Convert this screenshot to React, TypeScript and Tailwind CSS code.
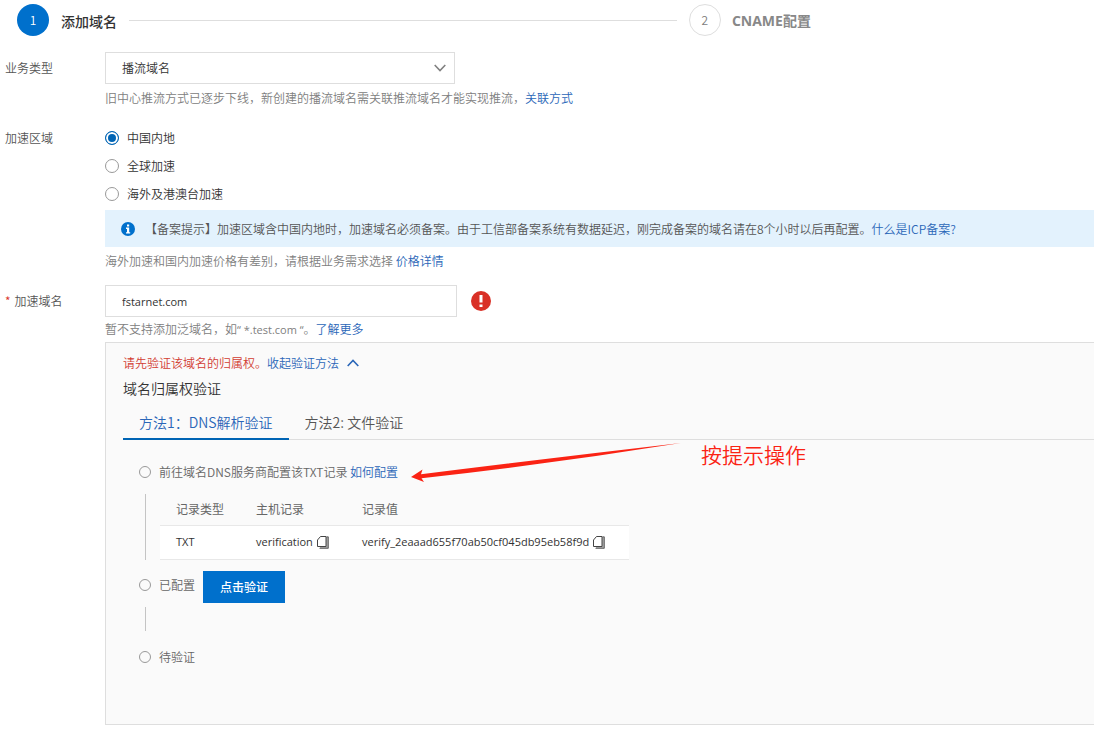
import { useState } from 'react'
import { clsx } from 'clsx'

const regions = ['中国内地', '全球加速', '海外及港澳台加速']
const tabs = ['方法1：DNS解析验证', '方法2: 文件验证']

const Link = ({ children }: { children: React.ReactNode }) => (
    <a href="#" className="text-[#2a66b8] hover:underline">{children}</a>
)

const CopyIcon = () => (
    <svg viewBox="0 0 12 13" className="h-[13px] w-3 text-[#444]" fill="none" stroke="currentColor">
        <path d="M9 1h2.300v11.300H3v-1.800h6z" fill="#aaa" stroke="none" />
        <path d="M3.500 .5H9v10H.5V4z" />
        <path d="M9.500 .8h1.800v11.500H2.500" strokeWidth=".8" />
    </svg>
)

const CopyButton = ({ label }: { label: string }) => (
    <button type="button" aria-label={label} className="cursor-pointer">
        <CopyIcon />
    </button>
)

const Dot = () => <span className="size-3 shrink-0 rounded-full border border-[#999]" />

const Steps = () => (
    <ol className="flex pr-0.5 pl-3">
        <li className="flex flex-5 items-center gap-3">
            <span className="flex size-8 shrink-0 items-center justify-center rounded-full bg-[#0070cc] text-white">1</span>
            <span className="pt-0.5 text-sm font-medium text-[#333]">添加域名</span>
            <span className="mr-3 h-px flex-1 bg-[#dedede]" />
        </li>
        <li className="flex flex-3 items-center gap-[11px]">
            <span className="flex size-8 shrink-0 items-center justify-center rounded-full border border-[#dedede] text-[#808080]">2</span>
            <span className="pt-0.5 font-['Open_Sans','Noto_Sans_CJK_SC',sans-serif] text-sm font-bold text-[#888]">CNAME配置</span>
        </li>
    </ol>
)

const RecordTable = () => (
    <table className="border-collapse text-left">
        <thead>
            <tr className="h-[31px] border-b border-[#e8e8e8] text-[#666]">
                <th className="w-20 pl-4 font-normal">记录类型</th>
                <th className="w-[106px] pl-4 font-normal">主机记录</th>
                <th className="w-[283px] pl-4 font-normal">记录值</th>
            </tr>
        </thead>
        <tbody className="font-['Open_Sans',sans-serif] text-[11px] font-normal">
            <tr className="h-[34px] border-b border-[#e8e8e8] bg-white text-[#333]">
                <td className="pl-4">TXT</td>
                <td className="pl-4">
                    <span className="flex items-center gap-1">verification <CopyButton label="复制主机记录" /></span>
                </td>
                <td className="pl-4">
                    <span className="flex items-center gap-1">
                        verify_2eaaad655f70ab50cf045db95eb58f9d <CopyButton label="复制记录值" />
                    </span>
                </td>
            </tr>
        </tbody>
    </table>
)

// red arrow and note that float over the panel
const Annotation = () => (
    <div className="pointer-events-none absolute top-0 left-[288px] flex items-start gap-5 text-[#fa2314]">
        <svg viewBox="0 0 270 44" className="h-11 w-[270px]" fill="currentColor">
            <path d="M0 37 11.5 29.5 10 34.2 Q140 18 270 3 Q140 24 10.500 38.200 L13 42z" />
        </svg>
        <span className="text-[21px] leading-7">按提示操作</span>
    </div>
)

const VerifyPanel = () => {
    const [tab, setTab] = useState(0)

    return (
        <section className="mt-0.5 border border-r-0 border-[#dedede] bg-[#fafafa] pt-2 pb-[55px] pl-[17px]">
            <p className="flex h-6 items-center text-[#d23c32]">
                请先验证该域名的归属权。
                <button type="button" className="flex cursor-pointer items-center gap-2 text-[#2a66b8]">
                    收起验证方法
                    <svg viewBox="0 0 12 8" className="h-2 w-3" fill="none" stroke="currentColor" strokeWidth="1.6">
                        <path d="M.7 7 6 1.500 11.300 7" />
                    </svg>
                </button>
            </p>
            <h2 className="flex h-7 items-center pb-0.5 text-sm text-[#333]">域名归属权验证</h2>
            <div role="tablist" className="mt-1 flex border-b border-[#dedede] text-sm">
                {tabs.map((name, i) => (
                    <button
                        key={name}
                        type="button"
                        role="tab"
                        aria-selected={i === tab}
                        onClick={() => setTab(i)}
                        className={clsx(
                            '-mb-px h-[33px] cursor-pointer border-b-2 px-4 pb-0.5',
                            i === tab ? 'border-[#0064b4] text-[#2a66b8]' : 'border-transparent text-[#555]',
                        )}
                    >
                        {name}
                    </button>
                ))}
            </div>
            <div className="relative pt-5 pl-4 text-[#666]">
                <div className="flex h-6 items-center gap-2">
                    <Dot />
                    <p>前往域名DNS服务商配置该TXT记录 <Link>如何配置</Link></p>
                </div>
                <div className="mt-2.5 ml-1.5 flex gap-3.5">
                    <span className="w-px bg-[#c4c4c4]" />
                    <RecordTable />
                </div>
                <div className="mt-[11px] flex gap-2">
                    <div className="flex h-7 items-center gap-2">
                        <Dot />
                        已配置
                    </div>
                    <button type="button" className="h-8 cursor-pointer bg-[#0070cc] px-[17px] font-medium text-white">点击验证</button>
                </div>
                <div className="mt-1 ml-1.5 h-6 w-px bg-[#c4c4c4]" />
                <div className="mt-3.5 flex h-6 items-center gap-2">
                    <Dot />
                    待验证
                </div>
                <Annotation />
            </div>
        </section>
    )
}

const App = () => {
    const [region, setRegion] = useState(regions[0])

    return (
        <main className="overflow-hidden bg-white pt-1 pb-2.5 pl-[5px] font-['Noto_Sans_CJK_SC',sans-serif] text-xs font-[350] text-[#555]">
            <Steps />
            <form className="mt-4">
                <div className="flex">
                    <label htmlFor="type" className="flex h-8 w-25 shrink-0 items-center">业务类型</label>
                    <div className="min-w-0 flex-1">
                        <div className="relative w-[350px]">
                            <select id="type" className="h-8 w-full appearance-none border border-[#dedede] bg-white px-4 text-[#333]">
                                <option>播流域名</option>
                            </select>
                            <svg viewBox="0 0 12 8" className="pointer-events-none absolute top-3 right-[9px] h-2 w-3 text-[#808080]" fill="none" stroke="currentColor" strokeWidth="1.6">
                                <path d="M.7 1 6 6.500 11.300 1" />
                            </svg>
                        </div>
                        <p className="mt-1 leading-5 text-[#808080]">
                            旧中心推流方式已逐步下线，新创建的播流域名需关联推流域名才能实现推流，<Link>关联方式</Link>
                        </p>
                    </div>
                </div>

                <fieldset className="mt-4 flex">
                    <legend className="float-left flex h-7 w-25 shrink-0 items-center">加速区域</legend>
                    <div className="min-w-0 flex-1">
                        {regions.map((name) => (
                            <label key={name} className="flex h-7 items-center gap-2 text-[#333]">
                                <input
                                    type="radio"
                                    name="region"
                                    checked={region === name}
                                    onChange={() => setRegion(name)}
                                    className="size-3.5 appearance-none rounded-full border border-[#999] bg-white checked:border-[#0064b4] checked:bg-[#0064b4] checked:shadow-[inset_0_0_0_2px_#fff]"
                                />
                                {name}
                            </label>
                        ))}
                        <div className="mt-0.5 flex h-[37px] items-center gap-2.5 bg-[#e3f2fd] pl-4">
                            <svg viewBox="0 0 14 14" className="size-3.5 shrink-0">
                                <circle cx="7" cy="7" r="7" fill="#0070cc" />
                                <path d="M6 2.500h2.200v2H6zM5 5.600h3.200v4.600h1v1.300H5v-1.300h1V6.900H5z" fill="#fff" />
                            </svg>
                            <p>
                                【备案提示】加速区域含中国内地时，加速域名必须备案。由于工信部备案系统有数据延迟，刚完成备案的域名请在8个小时以后再配置。<Link>什么是ICP备案?</Link>
                            </p>
                        </div>
                        <p className="mt-1 leading-5 text-[#808080]">
                            海外加速和国内加速价格有差别，请根据业务需求选择 <Link>价格详情</Link>
                        </p>
                    </div>
                </fieldset>

                <div className="mt-3.5 flex">
                    <label htmlFor="domain" className="flex h-8 w-25 shrink-0 items-center gap-1">
                        <span className="text-[#d93026]">*</span>加速域名
                    </label>
                    <div className="min-w-0 flex-1">
                        <div className="flex items-center gap-3.5">
                            <input id="domain" defaultValue="fstarnet.com" className="h-8 w-[352px] border border-[#dedede] bg-white px-4 font-['Open_Sans',sans-serif] text-[11px] font-normal text-[#333]" />
                            <svg viewBox="0 0 20 20" className="size-5">
                                <circle cx="10" cy="10" r="10" fill="#d93026" />
                                <path d="M8.500 4h3v7.500h-3zM8.500 13.500h3V16h-3z" fill="#fff" />
                            </svg>
                        </div>
                        <p className="mt-0.5 leading-5 text-[#808080]">
                            暂不支持添加泛域名，如<span className="font-['Open_Sans',sans-serif] text-[11px] font-normal">“ *.test.com “</span>。<Link>了解更多</Link>
                        </p>
                        <VerifyPanel />
                    </div>
                </div>
            </form>
        </main>
    )
}

export default App
